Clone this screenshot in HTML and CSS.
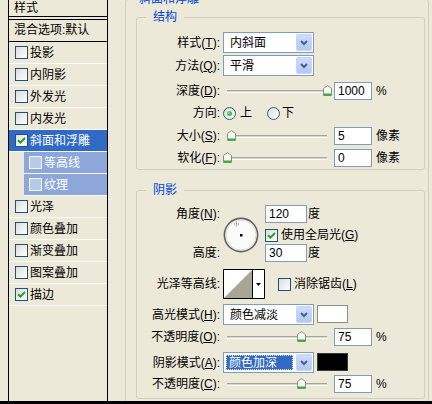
FILE: index.html
```html
<!DOCTYPE html>
<html lang="zh-CN">
<head>
<meta charset="utf-8">
<title>图层样式</title>
<link rel="stylesheet" href="styles.css">
</head>
<body>
<div class="dialog">
  <div class="main">
    <aside class="styles-list">
      <div class="list-head">样式</div>
      <div class="list-blend">混合选项:默认</div>
      <div class="item"><span class="cb"></span><span class="item-text">投影</span></div>
      <div class="item"><span class="cb"></span><span class="item-text">内阴影</span></div>
      <div class="item"><span class="cb"></span><span class="item-text">外发光</span></div>
      <div class="item"><span class="cb"></span><span class="item-text">内发光</span></div>
      <div class="item selected"><span class="cb"><svg class="tick" width="9" height="9" viewBox="0 0 9 9"><path d="M1 4.2 L3.4 6.6 L8 2" fill="none" stroke="#21A121" stroke-width="2"/></svg></span><span class="item-text">斜面和浮雕</span></div>
      <div class="item sub"><span class="cb"></span><span class="item-text">等高线</span></div>
      <div class="item sub"><span class="cb"></span><span class="item-text">纹理</span></div>
      <div class="item"><span class="cb"></span><span class="item-text">光泽</span></div>
      <div class="item"><span class="cb"></span><span class="item-text">颜色叠加</span></div>
      <div class="item"><span class="cb"></span><span class="item-text">渐变叠加</span></div>
      <div class="item"><span class="cb"></span><span class="item-text">图案叠加</span></div>
      <div class="item"><span class="cb"><svg class="tick" width="9" height="9" viewBox="0 0 9 9"><path d="M1 4.2 L3.4 6.6 L8 2" fill="none" stroke="#21A121" stroke-width="2"/></svg></span><span class="item-text">描边</span></div>
    </aside>

    <fieldset class="group outer">
      <legend class="outer-legend">斜面和浮雕</legend>

      <fieldset class="group inner struct">
        <legend>结构</legend>

        <div class="row h21 mt8">
          <span class="lbl">样式(<u>T</u>):</span>
          <div class="select"><span class="select-text">内斜面</span><span class="select-btn"><svg width="8" height="6" viewBox="0 0 8 6"><path d="M1 1 L4 4 L7 1" fill="none" stroke="#4D6185" stroke-width="2"/></svg></span></div>
        </div>
        <div class="row h21 mt2">
          <span class="lbl">方法(<u>Q</u>):</span>
          <div class="select"><span class="select-text">平滑</span><span class="select-btn"><svg width="8" height="6" viewBox="0 0 8 6"><path d="M1 1 L4 4 L7 1" fill="none" stroke="#4D6185" stroke-width="2"/></svg></span></div>
        </div>
        <div class="row h18 mt6">
          <span class="lbl">深度(<u>D</u>):</span>
          <div class="slider"><div class="track"></div><svg class="thumb" style="left:100px" width="9" height="11" viewBox="0 0 9 11"><path d="M0.5 3.5 L4.5 0.5 L8.5 3.5 V10.5 H0.5 Z" fill="#F7F7F4" stroke="#8C8C86"/><path d="M1 9.5 H8" stroke="#2DB32D" stroke-width="2"/></svg></div>
          <span class="field">1000</span><span class="unit">%</span>
        </div>
        <div class="row h18 mt4">
          <span class="lbl">方向:</span>
          <span class="radio on"></span><span class="radio-text">上</span>
          <span class="radio radio2"></span><span class="radio-text">下</span>
        </div>
        <div class="row h18 mt5">
          <span class="lbl">大小(<u>S</u>):</span>
          <div class="slider"><div class="track"></div><svg class="thumb" style="left:4px" width="9" height="11" viewBox="0 0 9 11"><path d="M0.5 3.5 L4.5 0.5 L8.5 3.5 V10.5 H0.5 Z" fill="#F7F7F4" stroke="#8C8C86"/><path d="M1 9.5 H8" stroke="#2DB32D" stroke-width="2"/></svg></div>
          <span class="field">5</span><span class="unit">像素</span>
        </div>
        <div class="row h18 mt4">
          <span class="lbl">软化(<u>F</u>):</span>
          <div class="slider"><div class="track"></div><svg class="thumb" style="left:0px" width="9" height="11" viewBox="0 0 9 11"><path d="M0.5 3.5 L4.5 0.5 L8.5 3.5 V10.5 H0.5 Z" fill="#F7F7F4" stroke="#8C8C86"/><path d="M1 9.5 H8" stroke="#2DB32D" stroke-width="2"/></svg></div>
          <span class="field">0</span><span class="unit">像素</span>
        </div>
      </fieldset>

      <fieldset class="group inner shade">
        <legend>阴影</legend>

        <div class="angle-block">
          <div class="angle-labels">
            <span class="lbl h18">角度(<u>N</u>):</span>
            <span class="lbl h18">高度:</span>
          </div>
          <svg class="dial" width="36" height="36" viewBox="0 0 36 36">
            <circle cx="18" cy="18" r="16.6" fill="#FBFBF9" stroke="#5F5F5F" stroke-width="1.6"/>
            <circle cx="18" cy="18" r="15" fill="none" stroke="#DEDBD0" stroke-width="1"/>
            <rect x="17" y="17" width="2.5" height="2.5" fill="#000"/>
            <path d="M13.5 4.5 V9.5 M11 7 H16" stroke="#6A6A6A" stroke-width="1" stroke-dasharray="1 1"/>
          </svg>
          <div class="angle-fields">
            <div class="row h18"><span class="field wide">120</span><span class="unit deg">度</span></div>
            <div class="row check-row"><span class="cb"><svg class="tick" width="9" height="9" viewBox="0 0 9 9"><path d="M1 4.2 L3.4 6.6 L8 2" fill="none" stroke="#21A121" stroke-width="2"/></svg></span><span class="check-text">使用全局光(<u>G</u>)</span></div>
            <div class="row h18 mt2"><span class="field wide">30</span><span class="unit deg">度</span></div>
          </div>
        </div>

        <div class="row h30 mt7">
          <span class="lbl">光泽等高线:</span>
          <div class="contour">
            <svg width="28" height="28" viewBox="0 0 28 28"><rect width="28" height="28" fill="#fff"/><polygon points="0,28 28,0 28,28" fill="#A9A596"/></svg>
            <span class="contour-arrow"><svg width="5" height="3" viewBox="0 0 5 3"><polygon points="0,0 5,0 2.5,3" fill="#000"/></svg></span>
          </div>
          <span class="cb aa"></span><span class="check-text">消除锯齿(<u>L</u>)</span>
        </div>

        <div class="row h21 mt5">
          <span class="lbl">高光模式(<u>H</u>):</span>
          <div class="select"><span class="select-text">颜色减淡</span><span class="select-btn"><svg width="8" height="6" viewBox="0 0 8 6"><path d="M1 1 L4 4 L7 1" fill="none" stroke="#4D6185" stroke-width="2"/></svg></span></div>
          <span class="swatch white"></span>
        </div>
        <div class="row h18 mt3">
          <span class="lbl">不透明度(<u>O</u>):</span>
          <div class="slider"><div class="track"></div><svg class="thumb" style="left:74px" width="9" height="11" viewBox="0 0 9 11"><path d="M0.5 3.5 L4.5 0.5 L8.5 3.5 V10.5 H0.5 Z" fill="#F7F7F4" stroke="#8C8C86"/><path d="M1 9.5 H8" stroke="#2DB32D" stroke-width="2"/></svg></div>
          <span class="field">75</span><span class="unit">%</span>
        </div>
        <div class="row h21 mt6">
          <span class="lbl">阴影模式(<u>A</u>):</span>
          <div class="select"><span class="select-text focused">颜色加深</span><span class="select-btn"><svg width="8" height="6" viewBox="0 0 8 6"><path d="M1 1 L4 4 L7 1" fill="none" stroke="#4D6185" stroke-width="2"/></svg></span></div>
          <span class="swatch black"></span>
        </div>
        <div class="row h18 mt2">
          <span class="lbl">不透明度(<u>C</u>):</span>
          <div class="slider"><div class="track"></div><svg class="thumb" style="left:74px" width="9" height="11" viewBox="0 0 9 11"><path d="M0.5 3.5 L4.5 0.5 L8.5 3.5 V10.5 H0.5 Z" fill="#F7F7F4" stroke="#8C8C86"/><path d="M1 9.5 H8" stroke="#2DB32D" stroke-width="2"/></svg></div>
          <span class="field">75</span><span class="unit">%</span>
        </div>
      </fieldset>
    </fieldset>
  </div>
  <div class="bottom-edge"></div>
</div>
</body>
</html>
```
FILE: styles.css
```css
html, body {
  margin: 0;
  padding: 0;
}
body {
  width: 432px;
  height: 404px;
  overflow: hidden;
  background: #ECE9D8;
  font-family: "Liberation Sans", "Noto Sans CJK SC", sans-serif;
  font-size: 12px;
  line-height: 14px;
  color: #000;
}
.dialog {
  display: flex;
  flex-direction: column;
  width: 432px;
  height: 404px;
}
.main {
  display: flex;
  align-items: flex-start;
  height: 401px;
  overflow: hidden;
}
.bottom-edge {
  height: 3px;
  background: #000;
}

/* ---------- left style list ---------- */
.styles-list {
  flex: none;
  width: 100px;
  height: 401px;
  box-sizing: border-box;
  margin-left: 8px;
  border-left: 1px solid #000;
  border-right: 1px solid #000;
  background: #ECE9D8;
}
.list-head {
  height: 16px;
  line-height: 16px;
  padding-left: 5px;
  border-bottom: 1px solid #000;
}
.list-blend {
  margin-top: 2px;
  height: 21px;
  line-height: 21px;
  padding-left: 5px;
  border-top: 1px solid #000;
  border-bottom: 1px solid #000;
}
.item {
  display: flex;
  align-items: center;
  height: 21px;
  padding-left: 6px;
  border-bottom: 1px solid #FBFAF6;
}
.item-text {
  margin-left: 2px;
  white-space: nowrap;
}
.item.selected {
  background: #316AC5;
  color: #fff;
}
.item.sub {
  margin-left: 15px;
  padding-left: 5px;
  background: #8DA7DA;
  color: #fff;
}
.item.sub .cb {
  border-color: #F2F5FB;
  background: #B9C9E8;
}

/* ---------- checkbox / radio ---------- */
.cb {
  flex: none;
  width: 13px;
  height: 13px;
  box-sizing: border-box;
  border: 1px solid #1C5180;
  background: linear-gradient(135deg, #DCDCD7, #FFFFFF);
  display: inline-flex;
  align-items: center;
  justify-content: center;
}
.radio {
  flex: none;
  width: 13px;
  height: 13px;
  box-sizing: border-box;
  border: 1px solid #2F5B8A;
  border-radius: 50%;
  background: linear-gradient(135deg, #DCDCD7, #FFFFFF);
  display: inline-flex;
  align-items: center;
  justify-content: center;
}
.radio.on::after {
  content: "";
  width: 5px;
  height: 5px;
  border-radius: 50%;
  background: radial-gradient(circle at 40% 40%, #6FE06F, #21A121);
}
.radio-text {
  margin-left: 4px;
}
.radio2 {
  margin-left: 15px;
}
.radio2 + .radio-text {
  margin-left: 2px;
}

/* ---------- group boxes ---------- */
fieldset.group {
  margin: 0;
  padding: 0;
  min-width: 0;
  box-sizing: border-box;
  border: 1px solid #D0D0BF;
  border-radius: 3px;
}
fieldset.group > legend {
  margin-left: 9px;
  padding: 0 7px;
  color: #0046D5;
  line-height: 14px;
  height: 14px;
}
fieldset.outer {
  flex: none;
  width: 304px;
  height: 430px;
  margin-top: -8px;
  margin-left: 17px;
  padding: 0 3px 0 10px;
}
fieldset.outer > legend.outer-legend {
  margin-left: 0;
  padding: 0 3px;
}
fieldset.inner {
  width: 289px;
}
fieldset.struct {
  margin-top: 4px;
  padding-bottom: 2px;
}
fieldset.shade {
  margin-top: 13px;
  padding-bottom: 5px;
}

/* ---------- rows ---------- */
.row {
  display: flex;
  align-items: center;
}
.h18 { height: 18px; }
.h21 { height: 21px; }
.h30 { height: 30px; }
.mt2 { margin-top: 2px; }
.mt3 { margin-top: 3px; }
.mt4 { margin-top: 4px; }
.mt5 { margin-top: 5px; }
.mt6 { margin-top: 6px; }
.mt7 { margin-top: 7px; }
.mt8 { margin-top: 8px; }

.lbl {
  flex: none;
  width: 83px;
  margin-right: 3px;
  text-align: right;
  white-space: nowrap;
}
u {
  text-decoration: underline;
  text-underline-offset: 1px;
}

/* select */
.select {
  flex: none;
  width: 91px;
  height: 21px;
  box-sizing: border-box;
  border: 1px solid #7F9DB9;
  background: #fff;
  display: flex;
}
.select-text {
  flex: 1;
  display: flex;
  align-items: center;
  padding-left: 6px;
  white-space: nowrap;
}
.select-text.focused {
  margin: 2px;
  padding-left: 3px;
  background: #316AC5;
  color: #fff;
  outline: 1px dotted #E8E0C0;
  outline-offset: -1px;
}
.select-btn {
  flex: none;
  width: 16px;
  margin: 1px;
  box-sizing: border-box;
  border: 1px solid #C6D6F9;
  border-radius: 2px;
  background: linear-gradient(#CCDAFC, #B3C8F6);
  display: flex;
  align-items: center;
  justify-content: center;
}

/* slider */
.slider {
  flex: none;
  position: relative;
  width: 107px;
  height: 18px;
  display: flex;
  align-items: center;
}
.track {
  flex: 1;
  margin: 0 3px 0 4px;
  height: 1px;
  border-top: 1px solid #A7A69C;
  border-bottom: 1px solid #FFFFFF;
  background: #DAD7CA;
}
.thumb {
  position: absolute;
  top: 3px;
}

/* text fields */
.field {
  flex: none;
  width: 38px;
  height: 18px;
  box-sizing: border-box;
  margin-left: 4px;
  padding-left: 3px;
  border: 1px solid #7F9DB9;
  background: #fff;
  display: flex;
  align-items: center;
}
.field.wide {
  width: 42px;
  margin-left: 0;
}
.unit {
  margin-left: 4px;
  white-space: nowrap;
}
.unit.deg {
  margin-left: 1px;
}

/* angle block */
.angle-block {
  display: flex;
  align-items: flex-start;
  margin-top: 8px;
}
.angle-labels {
  flex: none;
  display: flex;
  flex-direction: column;
  justify-content: space-between;
  height: 57px;
}
.angle-labels .lbl {
  display: flex;
  align-items: center;
  justify-content: flex-end;
  margin-right: 0;
}
.dial {
  flex: none;
  margin: 12px 6px 0 3px;
}
.angle-fields {
  display: flex;
  flex-direction: column;
}
.check-row {
  margin-top: 5px;
  height: 14px;
}
.check-text {
  margin-left: 3px;
  white-space: nowrap;
}

/* contour */
.contour {
  flex: none;
  width: 42px;
  height: 30px;
  box-sizing: border-box;
  border: 1px solid #000;
  background: #fff;
  display: flex;
}
.contour-arrow {
  flex: 1;
  border-left: 1px solid #000;
  display: flex;
  align-items: center;
  justify-content: center;
}
.cb.aa {
  margin-left: 13px;
}

/* swatches */
.swatch {
  flex: none;
  width: 31px;
  height: 18px;
  box-sizing: border-box;
  margin-left: 3px;
  align-self: flex-start;
  margin-top: 1px;
  border: 1px solid #8D8D86;
}
.swatch.white { background: #fff; }
.swatch.black { background: #000; border-color: #3A3A3A; }
```
